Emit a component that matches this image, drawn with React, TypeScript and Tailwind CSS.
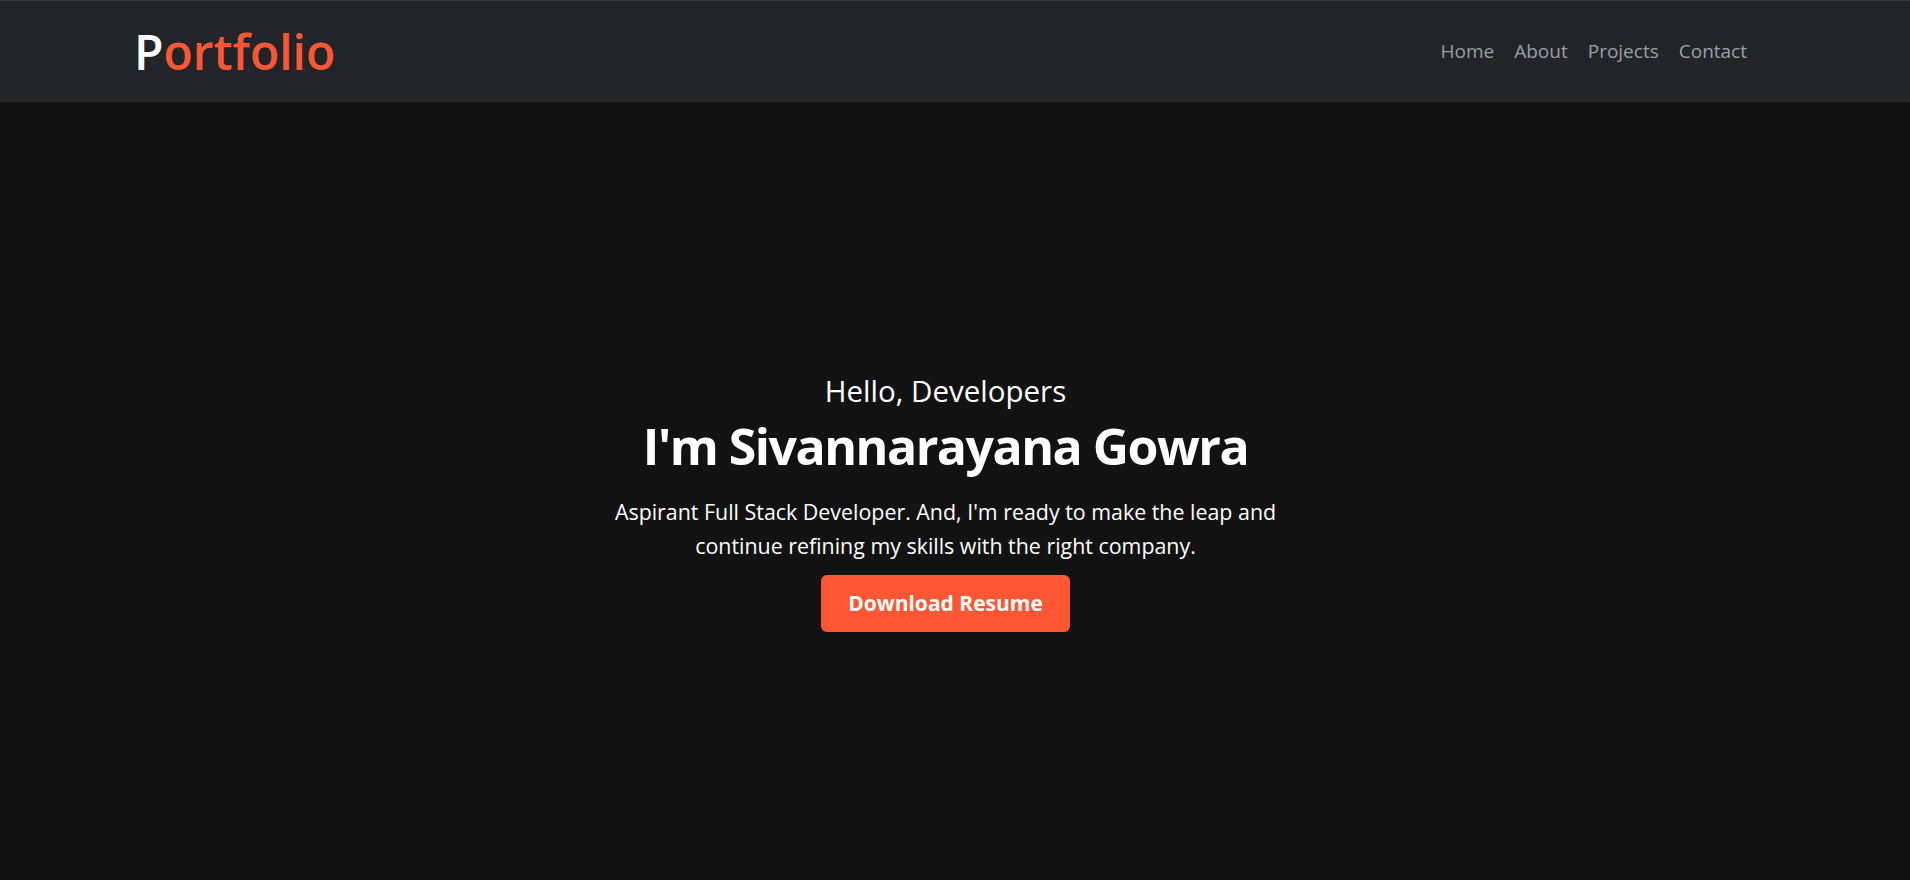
const navLinks = ["Home", "About", "Projects", "Contact"];

const projects = [
  { title: "Todos Application", text: "Create, update and track daily tasks with local storage." },
  { title: "Wikipedia Search", text: "Search Wikipedia articles with a simple, fast interface." },
  { title: "Nxt Trendz", text: "E-commerce app with login, product filters and cart." },
];

const App = () => {
  return (
    <div className="min-h-screen bg-[#121212] font-['Open_Sans',sans-serif] text-white">
      <header className="h-[102px] bg-[#212529] border-t border-[#3a3d41] flex items-center justify-between pl-[134px] pr-[153px]">
        <a href="#home" className="text-[48px] font-semibold leading-none text-[#ff5733]">
          <span className="text-white">P</span>ortfolio
        </a>
        <nav className="flex items-center">
          {navLinks.map((link) => (
            <a
              key={link}
              href={`#${link.toLowerCase()}`}
              className="px-[10px] text-[19px] text-[#9c9fa2]"
            >
              {link}
            </a>
          ))}
        </nav>
      </header>

      <section id="home" className="h-[804px] flex flex-col items-center pt-[269px] pr-[19px] text-center">
        <p className="text-[29.5px] leading-[40px]">Hello, Developers</p>
        <h1 className="mt-[3px] text-[50px] leading-[64px] font-bold tracking-[-0.03em]">
          I'm Sivannarayana Gowra
        </h1>
        <p className="mt-[17px] max-w-[710px] text-[21.4px] leading-[34px]">
          Aspirant Full Stack Developer. And, I'm ready to make the leap and continue refining my
          skills with the right company.
        </p>
        <button className="mt-[12px] h-[57px] px-[27px] rounded-md bg-[#ff5733] text-[21px] font-bold">
          Download Resume
        </button>
      </section>

      <section id="about" className="py-24 px-[134px]">
        <h2 className="text-4xl font-bold text-center mb-10">About Me</h2>
        <p className="max-w-3xl mx-auto text-lg leading-8 text-gray-300 text-center">
          I enjoy building responsive web applications with React, Node.js and SQL databases, and
          I am always learning new tools and practices.
        </p>
        <div className="h-[500px]" />
      </section>

      <section id="projects" className="py-24 px-[134px] bg-[#1a1a1a]">
        <h2 className="text-4xl font-bold text-center mb-10">Projects</h2>
        <div className="grid grid-cols-3 gap-8">
          {projects.map((project) => (
            <div key={project.title} className="h-[420px] rounded-lg bg-[#212529] p-8">
              <h3 className="text-2xl font-semibold mb-3">{project.title}</h3>
              <p className="text-gray-300">{project.text}</p>
            </div>
          ))}
        </div>
        <div className="h-[300px]" />
      </section>

      <section id="contact" className="py-24 px-[134px]">
        <h2 className="text-4xl font-bold text-center mb-10">Contact</h2>
        <p className="text-center text-gray-300 text-lg">sivannarayana@example.com</p>
        <div className="h-[400px]" />
      </section>
    </div>
  );
};

export default App;
